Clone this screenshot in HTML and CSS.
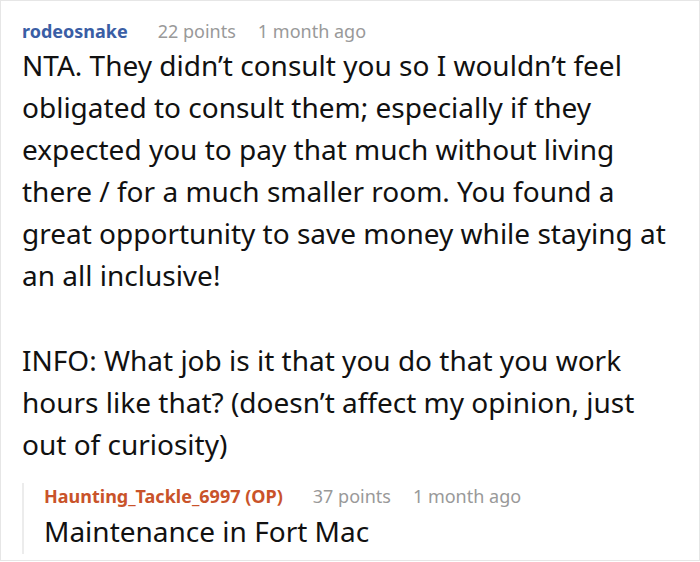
FILE: index.html
```html
<!DOCTYPE html>
<html>
<head>
<meta charset="utf-8">
<link rel="stylesheet" href="styles.css">
</head>
<body>
<div class="card">
  <div class="meta">
    <span class="user">rodeosnake</span>
    <span class="info">22 points</span>
    <span class="info">1 month ago</span>
  </div>
  <div class="body">
    <p>NTA. They didn’t consult you so I wouldn’t feel obligated to consult them; especially if they expected you to pay that much without living there / for a much smaller room. You found a great opportunity to save money while staying at an all inclusive!</p>
    <p>INFO: What job is it that you do that you work hours like that? (doesn’t affect my opinion, just out of curiosity)</p>
  </div>
  <div class="reply">
    <div class="meta">
      <span class="user op">Haunting_Tackle_6997 (OP)</span>
      <span class="info">37 points</span>
      <span class="info">1 month ago</span>
    </div>
    <div class="body">
      <p>Maintenance in Fort Mac</p>
    </div>
  </div>
</div>
</body>
</html>
```
FILE: styles.css
```css
html, body {
  margin: 0;
  padding: 0;
  background: #fff;
}
body {
  font-family: "Noto Sans", "Open Sans", sans-serif;
  color: #111;
}
.card {
  box-sizing: border-box;
  width: 700px;
  height: 561px;
  border: 1px solid #e6e6e6;
  padding: 17px 21px 0 21px;
}
.meta {
  display: flex;
  gap: 22px;
  font-size: 18px;
  line-height: 26px;
}
.user {
  font-weight: 700;
  color: #3a5ea5;
  margin-right: 8px;
}
.user.op {
  color: #c9532a;
}
.info {
  color: #999;
}
.body p {
  margin: 0 0 42px 0;
  font-size: 28px;
  line-height: 42.1px;
}
.body p:last-child {
  margin-bottom: 0;
}
.reply {
  margin-top: 18px;
  border-left: 2px solid #ececec;
  padding-left: 20px;
  padding-bottom: 2px;
}
.reply .meta {
  margin-bottom: 1px;
}
```
